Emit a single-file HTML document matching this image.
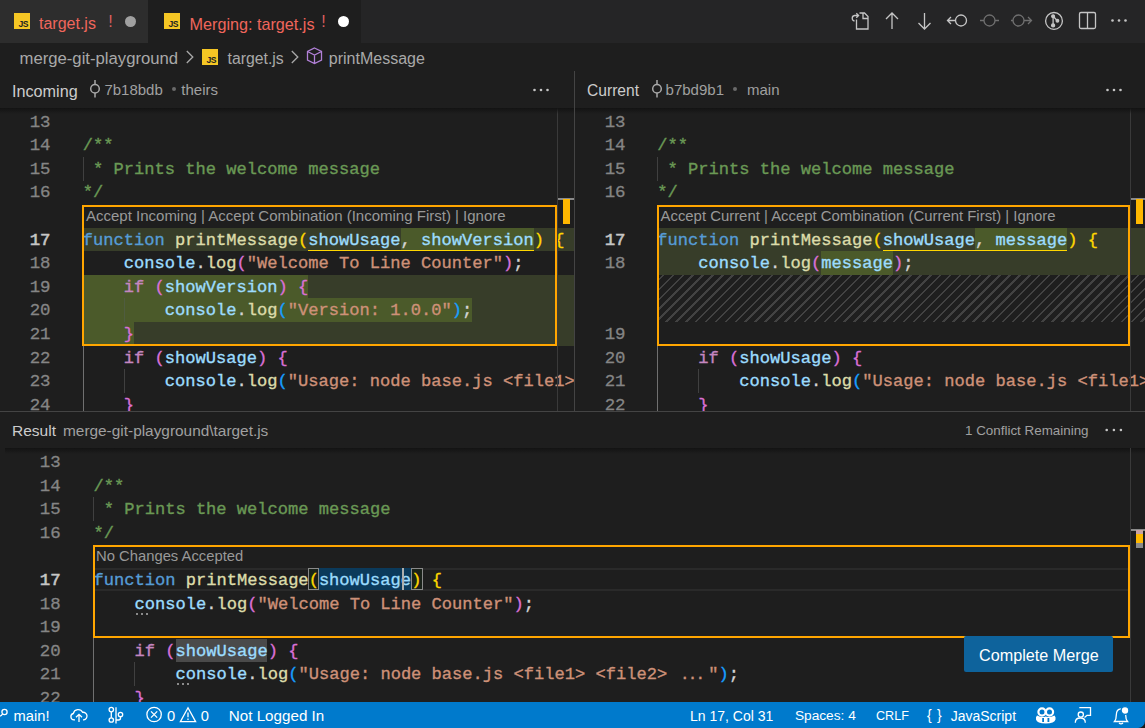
<!DOCTYPE html>
<html><head><meta charset="utf-8"><style>
html,body{margin:0;padding:0;background:#1e1e1e;overflow:hidden}
#root{position:relative;width:1145px;height:728px;overflow:hidden;background:#1e1e1e;font-family:"Liberation Sans",sans-serif}
.t{position:absolute;white-space:pre;font-family:"Liberation Sans",sans-serif}
.cl{position:absolute;white-space:pre;font-family:"Liberation Mono",monospace;font-size:17.08px;line-height:23.6px;color:#d4d4d4;-webkit-text-stroke:0.35px currentColor}
.ln{position:absolute;width:80px;text-align:right;white-space:pre;font-family:"Liberation Mono",monospace;font-size:17.4px;line-height:23.6px;-webkit-text-stroke:0.3px currentColor}
</style></head><body><div id="root">
<div style="position:absolute;left:0.00px;top:0.00px;width:1145.00px;height:43.00px;background:#252526;"></div>
<div style="position:absolute;left:0.00px;top:0.00px;width:148.00px;height:43.00px;background:#2d2d2d;"></div>
<div style="position:absolute;left:148.00px;top:0.00px;width:213.00px;height:43.00px;background:#1e1e1e;"></div>
<div style="position:absolute;left:14px;top:13px;width:16px;height:16px;background:#f5c624"></div>
<div class="t" style="left:18.6px;top:19.6px;font-size:8.6px;line-height:9px;color:#222;font-weight:bold;letter-spacing:-0.6px">JS</div>
<div class="t" style="left:39px;top:13.5px;font-size:16px;color:#f0665c;line-height:20px">target.js</div>
<div class="t" style="left:108.3px;top:12.3px;font-size:16px;color:#dc5f5f;line-height:20px">!</div>
<div style="position:absolute;left:125px;top:15.5px;width:11px;height:11px;border-radius:50%;background:#a0a0a0"></div>
<div style="position:absolute;left:164px;top:13px;width:16px;height:16px;background:#f5c624"></div>
<div class="t" style="left:168.6px;top:19.6px;font-size:8.6px;line-height:9px;color:#222;font-weight:bold;letter-spacing:-0.6px">JS</div>
<div class="t" style="left:189.5px;top:13.5px;font-size:16.2px;color:#f0665c;line-height:20px">Merging: target.js</div>
<div class="t" style="left:321.3px;top:12.3px;font-size:16px;color:#dc5f5f;line-height:20px">!</div>
<div style="position:absolute;left:338px;top:15.5px;width:11px;height:11px;border-radius:50%;background:#ffffff"></div>
<svg style="position:absolute;left:0;top:0" width="1145" height="43" fill="none" stroke-width="1.3">
<g stroke="#c5c5c5">
 <path d="M856.5 19.5 V29 H868 V16.5 L864.5 13 H859.5 M863 13 V18.5 H868"/>
 <path d="M854.5 21 A2.8 2.8 0 0 1 854.5 15.5 H858.5 M856.3 13.3 L858.6 15.5 L856.3 17.7"/>
 <path d="M892 13 v16 M886 19 l6 -6 l6 6"/>
 <path d="M924.5 13 v16 M918.5 23 l6 6 l6 -6"/>
 <circle cx="961" cy="20.5" r="5.5"/><path d="M955.5 20.5 h-8 M951 17 l-3.5 3.5 l3.5 3.5"/>
</g>
<g stroke="#6f6f6f">
 <circle cx="989.5" cy="20.5" r="5.5"/><path d="M980 20.5 h4 M995 20.5 h4"/>
 <circle cx="1018.5" cy="20.5" r="5.5"/><path d="M1013 20.5 h-2 M1024 20.5 h7.5 M1028 17 l3.5 3.5 l-3.5 3.5"/>
</g>
<g stroke="#c5c5c5">
 <circle cx="1054" cy="20.9" r="8.4"/>
 <path d="M1053.1 16.2 V25.4 M1053.6 16.8 L1057.4 20.7"/>
 <circle cx="1053.1" cy="16.2" r="1.4" fill="#c5c5c5"/><circle cx="1053.1" cy="25.4" r="1.5" fill="#c5c5c5"/><circle cx="1057.4" cy="20.7" r="1.3" fill="#c5c5c5"/>
 <rect x="1079.5" y="12.5" width="16" height="16" rx="1.5"/><path d="M1087.5 12.5 v16"/>
</g>
<g fill="#c5c5c5"><circle cx="1112.5" cy="20.5" r="1.3"/><circle cx="1119" cy="20.5" r="1.3"/><circle cx="1125.5" cy="20.5" r="1.3"/></g>
</svg>
<div style="position:absolute;left:0.00px;top:43.00px;width:1145.00px;height:29.00px;background:#1e1e1e;"></div>
<div class="t" style="left:19.5px;top:49.3px;font-size:16.7px;color:#a9a9a9;line-height:20px">merge-git-playground</div>
<svg style="position:absolute;left:0;top:43" width="400" height="29" fill="none" stroke="#a9a9a9" stroke-width="1.3"><path d="M186.8 8 l6 6 l-6 6"/><path d="M291.8 8 l6 6 l-6 6"/></svg>
<div style="position:absolute;left:202px;top:49px;width:16px;height:16px;background:#f5c624"></div>
<div class="t" style="left:206.6px;top:55.6px;font-size:8.6px;line-height:9px;color:#222;font-weight:bold;letter-spacing:-0.6px">JS</div>
<div class="t" style="left:227.5px;top:49.3px;font-size:15.8px;color:#a9a9a9;line-height:20px">target.js</div>
<svg style="position:absolute;left:300;top:43px;left:300px" width="30" height="29" fill="none" stroke="#b180d7" stroke-width="1.3"><path d="M14.5 5 l7 3.5 v8.5 l-7 3.5 l-7 -3.5 v-8.5 z M7.5 8.5 l7 3.5 l7 -3.5 M14.5 12 v8.5"/></svg>
<div class="t" style="left:328.8px;top:49.3px;font-size:16px;color:#a9a9a9;line-height:20px">printMessage</div>
<div style="position:absolute;left:0.00px;top:72.00px;width:1145.00px;height:36.00px;background:#1e1e1e;"></div>
<div style="position:absolute;left:574.00px;top:71.00px;width:1.00px;height:340.00px;background:#444444;"></div>
<div class="t" style="left:12px;top:81px;font-size:16.2px;color:#cccccc;line-height:20px">Incoming</div>
<svg style="position:absolute;left:89.2px;top:78px" width="12" height="22" fill="none" stroke="#a8a8a8" stroke-width="1.5"><circle cx="6" cy="10.7" r="4.3"/><path d="M6 2 v4.4 M6 15 v4.6"/></svg>
<div class="t" style="left:104.4px;top:79.5px;font-size:15px;color:#a0a0a0;line-height:20px">7b18bdb</div>
<div style="position:absolute;left:172px;top:86.7px;width:4px;height:4px;border-radius:50%;background:#6a6a6a"></div>
<div class="t" style="left:181.3px;top:79.5px;font-size:15px;color:#a0a0a0;line-height:20px">theirs</div>
<svg style="position:absolute;left:530.5px;top:82px" width="20" height="16" fill="#c5c5c5"><circle cx="3.5" cy="8" r="1.3"/><circle cx="10" cy="8" r="1.3"/><circle cx="16.5" cy="8" r="1.3"/></svg>
<div class="t" style="left:587px;top:81px;font-size:15.6px;color:#cccccc;line-height:20px">Current</div>
<svg style="position:absolute;left:650.5px;top:78px" width="12" height="22" fill="none" stroke="#a8a8a8" stroke-width="1.5"><circle cx="6" cy="10.7" r="4.3"/><path d="M6 2 v4.4 M6 15 v4.6"/></svg>
<div class="t" style="left:665.6px;top:79.5px;font-size:15px;color:#a0a0a0;line-height:20px">b7bd9b1</div>
<div style="position:absolute;left:733px;top:86.7px;width:4px;height:4px;border-radius:50%;background:#6a6a6a"></div>
<div class="t" style="left:747px;top:79.5px;font-size:15px;color:#a0a0a0;line-height:20px">main</div>
<svg style="position:absolute;left:1104px;top:82px" width="20" height="16" fill="#c5c5c5"><circle cx="3.5" cy="8" r="1.3"/><circle cx="10" cy="8" r="1.3"/><circle cx="16.5" cy="8" r="1.3"/></svg>
<div style="position:absolute;left:0px;top:108px;width:574px;height:303px;overflow:hidden;background:#1e1e1e">
<div style="position:absolute;left:82.80px;top:120.00px;width:491.20px;height:23.00px;background:#373d29;"></div>
<div style="position:absolute;left:400.55px;top:120.00px;width:133.25px;height:23.00px;background:#4b5a2a;"></div>
<div style="position:absolute;left:82.80px;top:167.00px;width:491.20px;height:71.00px;background:#373d29;"></div>
<div style="position:absolute;left:82.80px;top:167.00px;width:225.50px;height:23.00px;background:#4b5a2a;"></div>
<div style="position:absolute;left:82.80px;top:190.00px;width:389.50px;height:24.00px;background:#4b5a2a;"></div>
<div style="position:absolute;left:82.80px;top:214.00px;width:51.25px;height:24.00px;background:#4b5a2a;"></div>
<div style="position:absolute;left:308.30px;top:142.00px;width:225.50px;height:1.00px;background:#ffd700;"></div>
<div style="position:absolute;left:82.50px;top:49.00px;width:1.00px;height:23.60px;background:#404040;"></div>
<div style="position:absolute;left:82.50px;top:238.00px;width:1.00px;height:80.00px;background:#707070;"></div>
<div style="position:absolute;left:123.50px;top:261.00px;width:1.00px;height:23.60px;background:#404040;"></div>
<div style="position:absolute;left:123.50px;top:190.00px;width:1.00px;height:23.60px;background:#4f5c40;"></div>
<div class="ln" style="left:-29.50px;top:2.70px;color:#858585">13</div>
<div class="ln" style="left:-29.50px;top:25.70px;color:#858585">14</div>
<div class="ln" style="left:-29.50px;top:49.70px;color:#858585">15</div>
<div class="ln" style="left:-29.50px;top:72.70px;color:#858585">16</div>
<div class="ln" style="left:-29.50px;top:120.70px;color:#c6c6c6;-webkit-text-stroke:0.6px currentColor">17</div>
<div class="ln" style="left:-29.50px;top:143.70px;color:#858585">18</div>
<div class="ln" style="left:-29.50px;top:167.70px;color:#858585">19</div>
<div class="ln" style="left:-29.50px;top:190.70px;color:#858585">20</div>
<div class="ln" style="left:-29.50px;top:214.70px;color:#858585">21</div>
<div class="ln" style="left:-29.50px;top:238.70px;color:#858585">22</div>
<div class="ln" style="left:-29.50px;top:261.70px;color:#858585">23</div>
<div class="ln" style="left:-29.50px;top:285.70px;color:#858585">24</div>
<div class="cl" style="left:82.80px;top:25.60px"><span style="color:#6a9955">/**</span></div>
<div class="cl" style="left:82.80px;top:49.60px"><span style="color:#6a9955"> * Prints the welcome message</span></div>
<div class="cl" style="left:82.80px;top:72.60px"><span style="color:#6a9955">*/</span></div>
<div class="cl" style="left:82.80px;top:120.60px"><span style="color:#569cd6">function</span> <span style="color:#dcdcaa">printMessage</span><span style="color:#ffd700">(</span><span style="color:#9cdcfe">showUsage</span><span style="color:#d4d4d4">,</span> <span style="color:#9cdcfe">showVersion</span><span style="color:#ffd700">)</span> <span style="color:#ffd700">{</span></div>
<div class="cl" style="left:82.80px;top:143.60px">    <span style="color:#9cdcfe">console</span><span style="color:#d4d4d4">.</span><span style="color:#dcdcaa">log</span><span style="color:#da70d6">(</span><span style="color:#ce9178">"Welcome To Line Counter"</span><span style="color:#da70d6">)</span><span style="color:#d4d4d4">;</span></div>
<div class="cl" style="left:82.80px;top:167.60px">    <span style="color:#c586c0">if</span> <span style="color:#da70d6">(</span><span style="color:#9cdcfe">showVersion</span><span style="color:#da70d6">)</span> <span style="color:#da70d6">{</span></div>
<div class="cl" style="left:82.80px;top:190.60px">        <span style="color:#9cdcfe">console</span><span style="color:#d4d4d4">.</span><span style="color:#dcdcaa">log</span><span style="color:#179fff">(</span><span style="color:#ce9178">"Version: 1.0.0"</span><span style="color:#179fff">)</span><span style="color:#d4d4d4">;</span></div>
<div class="cl" style="left:82.80px;top:214.60px">    <span style="color:#da70d6">}</span></div>
<div class="cl" style="left:82.80px;top:238.60px">    <span style="color:#c586c0">if</span> <span style="color:#da70d6">(</span><span style="color:#9cdcfe">showUsage</span><span style="color:#da70d6">)</span> <span style="color:#da70d6">{</span></div>
<div class="cl" style="left:82.80px;top:261.60px">        <span style="color:#9cdcfe">console</span><span style="color:#d4d4d4">.</span><span style="color:#dcdcaa">log</span><span style="color:#179fff">(</span><span style="color:#ce9178">"Usage: node base.js &lt;file1&gt; &lt;file2&gt; </span><span style="color:#ce9178"><span style="display:inline-block;width:30.75px;font-family:&quot;Liberation Sans&quot;,sans-serif;font-size:20px;letter-spacing:2.2px;text-indent:4.5px;line-height:1px">...</span>"</span><span style="color:#179fff">)</span><span style="color:#d4d4d4">;</span></div>
<div class="cl" style="left:82.80px;top:285.60px">    <span style="color:#da70d6">}</span></div>
<div class="t" style="left:86px;top:97.9px;font-size:15px;color:#999999;line-height:20px">Accept Incoming | Accept Combination (Incoming First) | Ignore</div>
<div style="position:absolute;left:82px;top:97px;width:471px;height:137px;border:2px solid #ffa600"></div>
<div style="position:absolute;left:557.00px;top:0.00px;width:1.00px;height:303.00px;background:#3a3a3a;"></div>
<div style="position:absolute;left:558.00px;top:89.50px;width:16.00px;height:2.00px;background:#8a8a8a;"></div>
<div style="position:absolute;left:563.00px;top:91.00px;width:7.00px;height:25.00px;background:#ffb800;"></div>
<div style="position:absolute;left:0;top:0;width:574px;height:6px;background:linear-gradient(#131313,#1e1e1e00)"></div>
</div>
<div style="position:absolute;left:575px;top:108px;width:570px;height:303px;overflow:hidden;background:#1e1e1e">
<div style="position:absolute;left:82.30px;top:120.00px;width:487.70px;height:23.00px;background:#373d29;"></div>
<div style="position:absolute;left:400.05px;top:120.00px;width:92.25px;height:23.00px;background:#4b5a2a;"></div>
<div style="position:absolute;left:82.30px;top:143.00px;width:487.70px;height:24.00px;background:#373d29;"></div>
<div style="position:absolute;left:246.30px;top:143.00px;width:71.75px;height:24.00px;background:#4b5a2a;"></div>
<div style="position:absolute;left:307.80px;top:142.00px;width:184.50px;height:1.00px;background:#ffd700;"></div>
<div style="position:absolute;left:84.29999999999995px;top:167px;width:570px;height:47px;background:repeating-linear-gradient(-45deg,#1e1e1e 0px,#1e1e1e 5.2px,#424242 5.2px,#424242 7px)"></div>
<div style="position:absolute;left:82.00px;top:49.00px;width:1.00px;height:23.60px;background:#404040;"></div>
<div style="position:absolute;left:82.00px;top:238.00px;width:1.00px;height:80.00px;background:#707070;"></div>
<div style="position:absolute;left:123.00px;top:261.00px;width:1.00px;height:23.60px;background:#404040;"></div>
<div class="ln" style="left:-29.50px;top:2.70px;color:#858585">13</div>
<div class="ln" style="left:-29.50px;top:25.70px;color:#858585">14</div>
<div class="ln" style="left:-29.50px;top:49.70px;color:#858585">15</div>
<div class="ln" style="left:-29.50px;top:72.70px;color:#858585">16</div>
<div class="ln" style="left:-29.50px;top:120.70px;color:#c6c6c6;-webkit-text-stroke:0.6px currentColor">17</div>
<div class="ln" style="left:-29.50px;top:143.70px;color:#858585">18</div>
<div class="ln" style="left:-29.50px;top:214.70px;color:#858585">19</div>
<div class="ln" style="left:-29.50px;top:238.70px;color:#858585">20</div>
<div class="ln" style="left:-29.50px;top:261.70px;color:#858585">21</div>
<div class="ln" style="left:-29.50px;top:285.70px;color:#858585">22</div>
<div class="cl" style="left:82.30px;top:25.60px"><span style="color:#6a9955">/**</span></div>
<div class="cl" style="left:82.30px;top:49.60px"><span style="color:#6a9955"> * Prints the welcome message</span></div>
<div class="cl" style="left:82.30px;top:72.60px"><span style="color:#6a9955">*/</span></div>
<div class="cl" style="left:82.30px;top:120.60px"><span style="color:#569cd6">function</span> <span style="color:#dcdcaa">printMessage</span><span style="color:#ffd700">(</span><span style="color:#9cdcfe">showUsage</span><span style="color:#d4d4d4">,</span> <span style="color:#9cdcfe">message</span><span style="color:#ffd700">)</span> <span style="color:#ffd700">{</span></div>
<div class="cl" style="left:82.30px;top:143.60px">    <span style="color:#9cdcfe">console</span><span style="color:#d4d4d4">.</span><span style="color:#dcdcaa">log</span><span style="color:#da70d6">(</span><span style="color:#9cdcfe">message</span><span style="color:#da70d6">)</span><span style="color:#d4d4d4">;</span></div>
<div class="cl" style="left:82.30px;top:238.60px">    <span style="color:#c586c0">if</span> <span style="color:#da70d6">(</span><span style="color:#9cdcfe">showUsage</span><span style="color:#da70d6">)</span> <span style="color:#da70d6">{</span></div>
<div class="cl" style="left:82.30px;top:261.60px">        <span style="color:#9cdcfe">console</span><span style="color:#d4d4d4">.</span><span style="color:#dcdcaa">log</span><span style="color:#179fff">(</span><span style="color:#ce9178">"Usage: node base.js &lt;file1&gt; &lt;file2&gt; </span><span style="color:#ce9178"><span style="display:inline-block;width:30.75px;font-family:&quot;Liberation Sans&quot;,sans-serif;font-size:20px;letter-spacing:2.2px;text-indent:4.5px;line-height:1px">...</span>"</span><span style="color:#179fff">)</span><span style="color:#d4d4d4">;</span></div>
<div class="cl" style="left:82.30px;top:285.60px">    <span style="color:#da70d6">}</span></div>
<div class="t" style="left:85.5px;top:97.9px;font-size:14.9px;color:#999999;line-height:20px">Accept Current | Accept Combination (Current First) | Ignore</div>
<div style="position:absolute;left:82px;top:97px;width:469px;height:137px;border:2px solid #ffa600"></div>
<div style="position:absolute;left:555.00px;top:0.00px;width:1.00px;height:303.00px;background:#3a3a3a;"></div>
<div style="position:absolute;left:556.00px;top:89.50px;width:14.00px;height:2.00px;background:#8a8a8a;"></div>
<div style="position:absolute;left:561.00px;top:91.00px;width:7.00px;height:25.00px;background:#ffb800;"></div>
<div style="position:absolute;left:0;top:0;width:570px;height:6px;background:linear-gradient(#131313,#1e1e1e00)"></div>
</div>
<div style="position:absolute;left:0.00px;top:411.00px;width:1145.00px;height:1.00px;background:#444444;"></div>
<div style="position:absolute;left:0.00px;top:412.00px;width:1145.00px;height:36.00px;background:#1e1e1e;"></div>
<div class="t" style="left:12px;top:421px;font-size:15.5px;color:#cccccc;line-height:20px">Result</div>
<div class="t" style="left:63px;top:421px;font-size:15.4px;color:#a0a0a0;line-height:20px">merge-git-playground\target.js</div>
<div class="t" style="left:965px;top:421px;font-size:13.4px;color:#a0a0a0;line-height:20px">1 Conflict Remaining</div>
<svg style="position:absolute;left:1099px;top:422px" width="30" height="16" fill="#c5c5c5"><circle cx="7.7" cy="8" r="1.3"/><circle cx="14.9" cy="8" r="1.3"/><circle cx="21.9" cy="8" r="1.3"/></svg>
<div style="position:absolute;left:0px;top:448px;width:1145px;height:254px;overflow:hidden;background:#1e1e1e">
<div style="position:absolute;left:95.00px;top:119.70px;width:1035.00px;height:2.00px;background:#2a2a2a;"></div>
<div style="position:absolute;left:95.00px;top:141.20px;width:1035.00px;height:2.00px;background:#2a2a2a;"></div>
<div style="position:absolute;left:307.65px;top:119.70px;width:9.75px;height:20.60px;border:1px solid #8a8a8a;background:#1a221a"></div>
<div style="position:absolute;left:318.90px;top:119.70px;width:92.25px;height:22.70px;background:#0b3a5b;"></div>
<div style="position:absolute;left:411.15px;top:119.70px;width:9.75px;height:20.60px;border:1px solid #8a8a8a;background:#1a221a"></div>
<div style="position:absolute;left:176.00px;top:191.00px;width:91.00px;height:23.20px;background:#4a4a4a;"></div>
<div style="position:absolute;left:93.10px;top:49.00px;width:1.00px;height:23.60px;background:#404040;"></div>
<div style="position:absolute;left:93.10px;top:189.00px;width:1.00px;height:80.00px;background:#707070;"></div>
<div style="position:absolute;left:134.10px;top:214.00px;width:1.00px;height:23.60px;background:#404040;"></div>
<div class="ln" style="left:-19.40px;top:2.70px;color:#858585">13</div>
<div class="ln" style="left:-19.40px;top:26.70px;color:#858585">14</div>
<div class="ln" style="left:-19.40px;top:49.70px;color:#858585">15</div>
<div class="ln" style="left:-19.40px;top:73.70px;color:#858585">16</div>
<div class="ln" style="left:-19.40px;top:120.70px;color:#c6c6c6;-webkit-text-stroke:0.6px currentColor">17</div>
<div class="ln" style="left:-19.40px;top:144.70px;color:#858585">18</div>
<div class="ln" style="left:-19.40px;top:167.70px;color:#858585">19</div>
<div class="ln" style="left:-19.40px;top:191.70px;color:#858585">20</div>
<div class="ln" style="left:-19.40px;top:214.70px;color:#858585">21</div>
<div class="ln" style="left:-19.40px;top:238.70px;color:#858585">22</div>
<div class="cl" style="left:93.40px;top:26.60px"><span style="color:#6a9955">/**</span></div>
<div class="cl" style="left:93.40px;top:49.60px"><span style="color:#6a9955"> * Prints the welcome message</span></div>
<div class="cl" style="left:93.40px;top:73.60px"><span style="color:#6a9955">*/</span></div>
<div class="cl" style="left:93.40px;top:120.60px"><span style="color:#569cd6">function</span> <span style="color:#dcdcaa">printMessage</span><span style="color:#ffd700">(</span><span style="color:#9cdcfe">showUsage</span><span style="color:#ffd700">)</span> <span style="color:#ffd700">{</span></div>
<div class="cl" style="left:93.40px;top:144.60px">    <span style="color:#9cdcfe">console</span><span style="color:#d4d4d4">.</span><span style="color:#dcdcaa">log</span><span style="color:#da70d6">(</span><span style="color:#ce9178">"Welcome To Line Counter"</span><span style="color:#da70d6">)</span><span style="color:#d4d4d4">;</span></div>
<div class="cl" style="left:93.40px;top:191.60px">    <span style="color:#c586c0">if</span> <span style="color:#da70d6">(</span><span style="color:#9cdcfe">showUsage</span><span style="color:#da70d6">)</span> <span style="color:#da70d6">{</span></div>
<div class="cl" style="left:93.40px;top:214.60px">        <span style="color:#9cdcfe">console</span><span style="color:#d4d4d4">.</span><span style="color:#dcdcaa">log</span><span style="color:#179fff">(</span><span style="color:#ce9178">"Usage: node base.js &lt;file1&gt; &lt;file2&gt; </span><span style="color:#ce9178"><span style="display:inline-block;width:30.75px;font-family:&quot;Liberation Sans&quot;,sans-serif;font-size:20px;letter-spacing:2.2px;text-indent:4.5px;line-height:1px">...</span>"</span><span style="color:#179fff">)</span><span style="color:#d4d4d4">;</span></div>
<div class="cl" style="left:93.40px;top:238.60px">    <span style="color:#da70d6">}</span></div>
<div style="position:absolute;left:401.50px;top:120.10px;width:2.00px;height:22.40px;background:#aeafad;"></div>
<div style="position:absolute;left:135.90px;top:164.60px;width:2.00px;height:2.00px;background:#8a8a8a;"></div>
<div style="position:absolute;left:140.90px;top:164.60px;width:2.00px;height:2.00px;background:#8a8a8a;"></div>
<div style="position:absolute;left:145.90px;top:164.60px;width:2.00px;height:2.00px;background:#8a8a8a;"></div>
<div style="position:absolute;left:176.90px;top:234.60px;width:2.00px;height:2.00px;background:#8a8a8a;"></div>
<div style="position:absolute;left:181.90px;top:234.60px;width:2.00px;height:2.00px;background:#8a8a8a;"></div>
<div style="position:absolute;left:186.90px;top:234.60px;width:2.00px;height:2.00px;background:#8a8a8a;"></div>
<div class="t" style="left:96px;top:97.9px;font-size:14.8px;color:#999999;line-height:20px">No Changes Accepted</div>
<div style="position:absolute;left:93px;top:97px;width:1033px;height:89px;border:2px solid #ffa600"></div>
<div style="position:absolute;left:5px;top:0;width:1140px;height:6px;background:linear-gradient(#131313,#1e1e1e00)"></div>
<div style="position:absolute;left:1130.00px;top:0.00px;width:1.00px;height:254.00px;background:#3a3a3a;"></div>
<div style="position:absolute;left:1131.00px;top:80.50px;width:14.00px;height:2.00px;background:#8a8a8a;"></div>
<div style="position:absolute;left:1136.00px;top:82.00px;width:7.00px;height:4.00px;background:#c9a3a3;"></div>
<div style="position:absolute;left:1136.00px;top:86.00px;width:7.00px;height:9.00px;background:#ffb800;"></div>
<div style="position:absolute;left:1136.00px;top:95.00px;width:7.00px;height:5.00px;background:#8a8a8a;"></div>
<div style="position:absolute;left:964px;top:188px;width:149px;height:36px;background:#0e639c;border-radius:2px"></div>
<div class="t" style="left:979px;top:197px;font-size:16.2px;color:#ffffff;line-height:20px">Complete Merge</div>
</div>
<div style="position:absolute;left:0.00px;top:702.00px;width:1145.00px;height:26.00px;background:#007acc;"></div>
<svg style="position:absolute;left:0;top:702px" width="1145" height="26" fill="none" stroke="#ffffff" stroke-width="1.3">
 <circle cx="4.5" cy="10" r="2.6"/><path d="M2.6 11.8 Q1 14 -1 14.5"/>
 <path d="M75 17.8 H74 A3.2 3.2 0 0 1 73.3 11.5 A5 5 0 0 1 82.6 10.3 A3.7 3.7 0 0 1 83.8 17.8 H83 M79 20 V12.3 M76 15.3 L79 12.3 L82 15.3"/>
 <circle cx="111.3" cy="7.6" r="2.2"/><circle cx="111.3" cy="18" r="2.2"/><path d="M111.3 9.8 V15.8 M116 5.2 V21.4 M120.5 14.7 V16 Q120.5 18 118.5 18 H116"/><circle cx="120.5" cy="12.5" r="2.2"/>
 <circle cx="154.1" cy="12.5" r="7.2"/><path d="M151 9.4 L157.2 15.6 M157.2 9.4 L151 15.6"/>
 <path d="M188 5.8 L195.6 19.6 H180.4 Z M188 10.5 V15.2 M188 16.6 V18"/>
 <path d="M1075.3 20.8 Q1075.3 16 1080.3 16 Q1085.3 16 1085.3 20.8 M1079.3 5.6 H1090.5 V13.3 H1087 L1084.5 15.5"/>
 <circle cx="1080.8" cy="12.6" r="2.6"/>
 <path d="M1114.5 19.5 Q1116.3 17.5 1116.3 13 Q1116.3 7 1121 6.8 Q1125.5 7 1125.7 13 Q1125.7 17.5 1127.5 19.5 Z M1119 21 Q1121 22.8 1123 21"/>
</svg>
<svg style="position:absolute;left:1034px;top:706px" width="24" height="20">
 <circle cx="8" cy="6" r="3.6" fill="none" stroke="#fff" stroke-width="2.2"/><circle cx="15.5" cy="6" r="3.6" fill="none" stroke="#fff" stroke-width="2.2"/>
 <path d="M3 9.5 Q1.5 11 2 13.5 Q3 17.5 11.75 17.5 Q20.5 17.5 21.5 13.5 Q22 11 20.5 9.5 L18 10.5 Q15 11.5 11.75 10.5 Q8.5 11.5 5.5 10.5 Z" fill="#fff"/>
 <rect x="8.2" y="12" width="1.8" height="4" fill="#007acc"/><rect x="13.5" y="12" width="1.8" height="4" fill="#007acc"/>
</svg>
<svg style="position:absolute;left:1115px;top:702px" width="20" height="20"><circle cx="10" cy="8.5" r="3.9" fill="#ffffff" stroke="#007acc" stroke-width="1.4"/></svg>
<div class="t" style="left:13.6px;top:706px;font-size:14.7px;color:#ffffff;line-height:20px">main!</div>
<div class="t" style="left:167px;top:706px;font-size:14.7px;color:#ffffff;line-height:20px">0</div>
<div class="t" style="left:200.8px;top:706px;font-size:14.7px;color:#ffffff;line-height:20px">0</div>
<div class="t" style="left:228.8px;top:706px;font-size:15.2px;color:#ffffff;line-height:20px">Not Logged In</div>
<div class="t" style="left:690px;top:706px;font-size:14px;color:#ffffff;line-height:20px">Ln 17, Col 31</div>
<div class="t" style="left:794.9px;top:706px;font-size:13.7px;color:#ffffff;line-height:20px">Spaces: 4</div>
<div class="t" style="left:876px;top:706px;font-size:12.6px;color:#ffffff;line-height:20px">CRLF</div>
<div class="t" style="left:927px;top:705px;font-size:14px;color:#ffffff;line-height:20px">{</div>
<div class="t" style="left:937px;top:705px;font-size:14px;color:#ffffff;line-height:20px">}</div>
<div class="t" style="left:950.7px;top:706px;font-size:14px;color:#ffffff;line-height:20px">JavaScript</div>
<svg style="position:absolute;left:1133px;top:716px" width="12" height="12"><path d="M12 5 V12 H5 A7 7 0 0 0 12 5 Z" fill="#1a1a1a"/></svg>
</div></body></html>
